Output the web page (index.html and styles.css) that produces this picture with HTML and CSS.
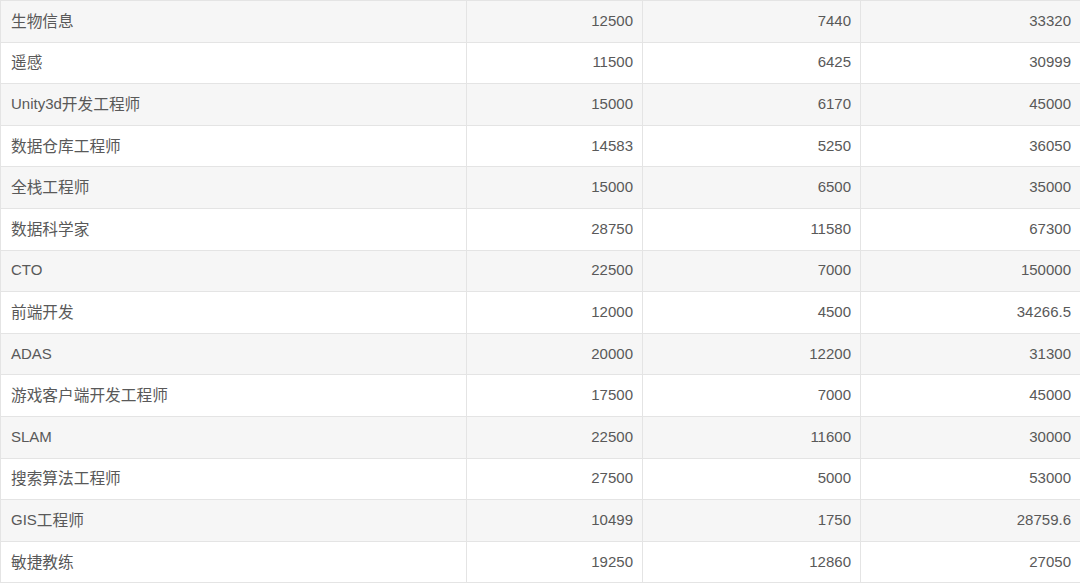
FILE: index.html
```html
<!DOCTYPE html>
<html lang="zh">
<head>
<meta charset="utf-8">
<link rel="stylesheet" href="styles.css">
</head>
<body>
<table class="data">
  <colgroup>
    <col class="c1"><col class="c2"><col class="c3"><col class="c4">
  </colgroup>
  <tbody>
    <tr><td><span class="zh">生物信息</span></td><td class="num">12500</td><td class="num">7440</td><td class="num">33320</td></tr>
    <tr><td><span class="zh">遥感</span></td><td class="num">11500</td><td class="num">6425</td><td class="num">30999</td></tr>
    <tr><td>Unity3d<span class="zh">开发工程师</span></td><td class="num">15000</td><td class="num">6170</td><td class="num">45000</td></tr>
    <tr><td><span class="zh">数据仓库工程师</span></td><td class="num">14583</td><td class="num">5250</td><td class="num">36050</td></tr>
    <tr><td><span class="zh">全栈工程师</span></td><td class="num">15000</td><td class="num">6500</td><td class="num">35000</td></tr>
    <tr><td><span class="zh">数据科学家</span></td><td class="num">28750</td><td class="num">11580</td><td class="num">67300</td></tr>
    <tr><td>CTO</td><td class="num">22500</td><td class="num">7000</td><td class="num">150000</td></tr>
    <tr><td><span class="zh">前端开发</span></td><td class="num">12000</td><td class="num">4500</td><td class="num">34266.5</td></tr>
    <tr><td>ADAS</td><td class="num">20000</td><td class="num">12200</td><td class="num">31300</td></tr>
    <tr><td><span class="zh">游戏客户端开发工程师</span></td><td class="num">17500</td><td class="num">7000</td><td class="num">45000</td></tr>
    <tr><td>SLAM</td><td class="num">22500</td><td class="num">11600</td><td class="num">30000</td></tr>
    <tr><td><span class="zh">搜索算法工程师</span></td><td class="num">27500</td><td class="num">5000</td><td class="num">53000</td></tr>
    <tr><td>GIS<span class="zh">工程师</span></td><td class="num">10499</td><td class="num">1750</td><td class="num">28759.6</td></tr>
    <tr><td><span class="zh">敏捷教练</span></td><td class="num">19250</td><td class="num">12860</td><td class="num">27050</td></tr>
  </tbody>
</table>
</body>
</html>
```
FILE: styles.css
```css
html, body {
  margin: 0;
  padding: 0;
  background: #ffffff;
  overflow: hidden;
}
.data {
  border-collapse: collapse;
  table-layout: fixed;
  width: 1082px;
  font-family: "Liberation Sans", Arial, "Noto Sans CJK SC", sans-serif;
  font-size: 15px;
  line-height: 20px;
  color: #595959;
}
.c1 { width: 466px; }
.c2 { width: 176px; }
.c3 { width: 218px; }
.c4 { width: 222px; }
.data td {
  border: 1px solid #e4e4e4;
  height: 41.6px;
  padding: 0 9px 1px 10px;
  box-sizing: border-box;
  white-space: nowrap;
  vertical-align: middle;
}
.data td.num {
  text-align: right;
}
.data td:last-child {
  padding-right: 11px;
}
.data tr:nth-child(odd) td {
  background: #f6f6f6;
}
.zh {
  font-family: "Noto Sans CJK SC", sans-serif;
  font-size: 15.7px;
  line-height: 1;
  vertical-align: -1px;
}
```
